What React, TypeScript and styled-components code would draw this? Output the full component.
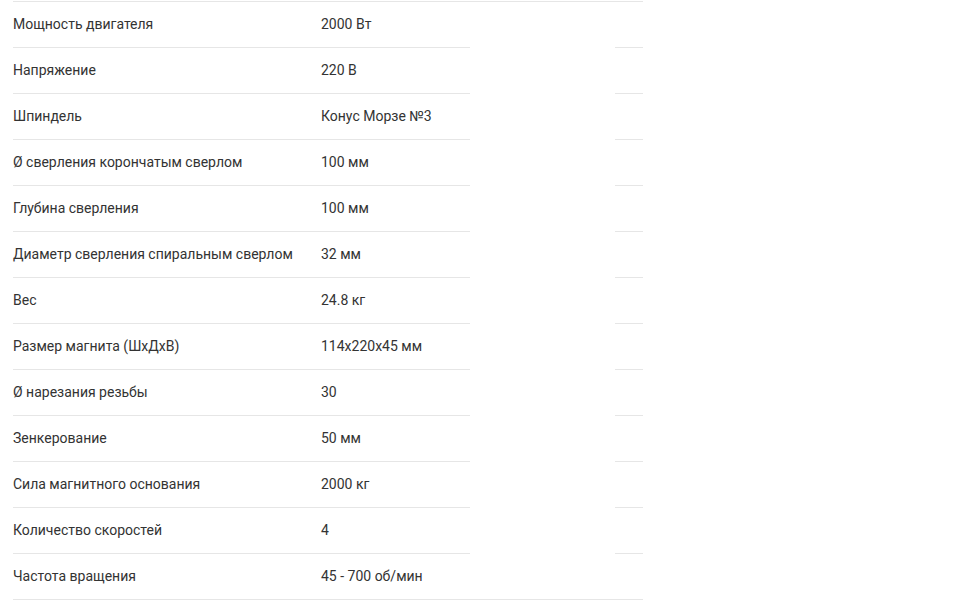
import React, { FC } from 'react';
import styled, { createGlobalStyle, css } from 'styled-components';

const GlobalStyle = createGlobalStyle`
  html, body {
    margin: 0;
    padding: 0;
    background: #ffffff;
  }
  body {
    font-family: Roboto, 'Liberation Sans', Arial, sans-serif;
  }
`;

const Page = styled.div`
  padding: 1px 0 0 13px;
`;

const Table = styled.div`
  width: 630px;
  border-top: 1px solid #e6e6e6;
  border-bottom: 1px solid #e6e6e6;
`;

const Row = styled.div<{ $last?: boolean }>`
  display: grid;
  grid-template-columns: 300px 157px 145px 28px;
  ${({ $last }) =>
    $last
      ? css`
          height: 45px;
        `
      : css`
          height: 46px;
          & > div {
            border-bottom: 1px solid #e6e6e6;
          }
          & > div:nth-child(3) {
            border-bottom-color: transparent;
          }
        `}
`;

const Cell = styled.div<{ $pad?: number }>`
  ${({ $pad = 0 }) => css`
    box-sizing: border-box;
    display: flex;
    align-items: center;
    padding-left: ${$pad}px;
    padding-bottom: 2px;
    font-size: 14px;
    color: #333333;
    white-space: nowrap;
  `}
`;

const specs: [string, string][] = [
  ['Мощность двигателя', '2000 Вт'],
  ['Напряжение', '220 В'],
  ['Шпиндель', 'Конус Морзе №3'],
  ['Ø сверления корончатым сверлом', '100 мм'],
  ['Глубина сверления', '100 мм'],
  ['Диаметр сверления спиральным сверлом', '32 мм'],
  ['Вес', '24.8 кг'],
  ['Размер магнита (ШхДхВ)', '114х220х45 мм'],
  ['Ø нарезания резьбы', '30'],
  ['Зенкерование', '50 мм'],
  ['Сила магнитного основания', '2000 кг'],
  ['Количество скоростей', '4'],
  ['Частота вращения', '45 - 700 об/мин'],
];

const App: FC = () => (
  <>
    <GlobalStyle />
    <Page>
      <Table>
        {specs.map(([label, value], i) => (
          <Row key={label} $last={i === specs.length - 1}>
            <Cell>{label}</Cell>
            <Cell $pad={8}>{value}</Cell>
            <Cell />
            <Cell />
          </Row>
        ))}
      </Table>
    </Page>
  </>
);

export default App;
